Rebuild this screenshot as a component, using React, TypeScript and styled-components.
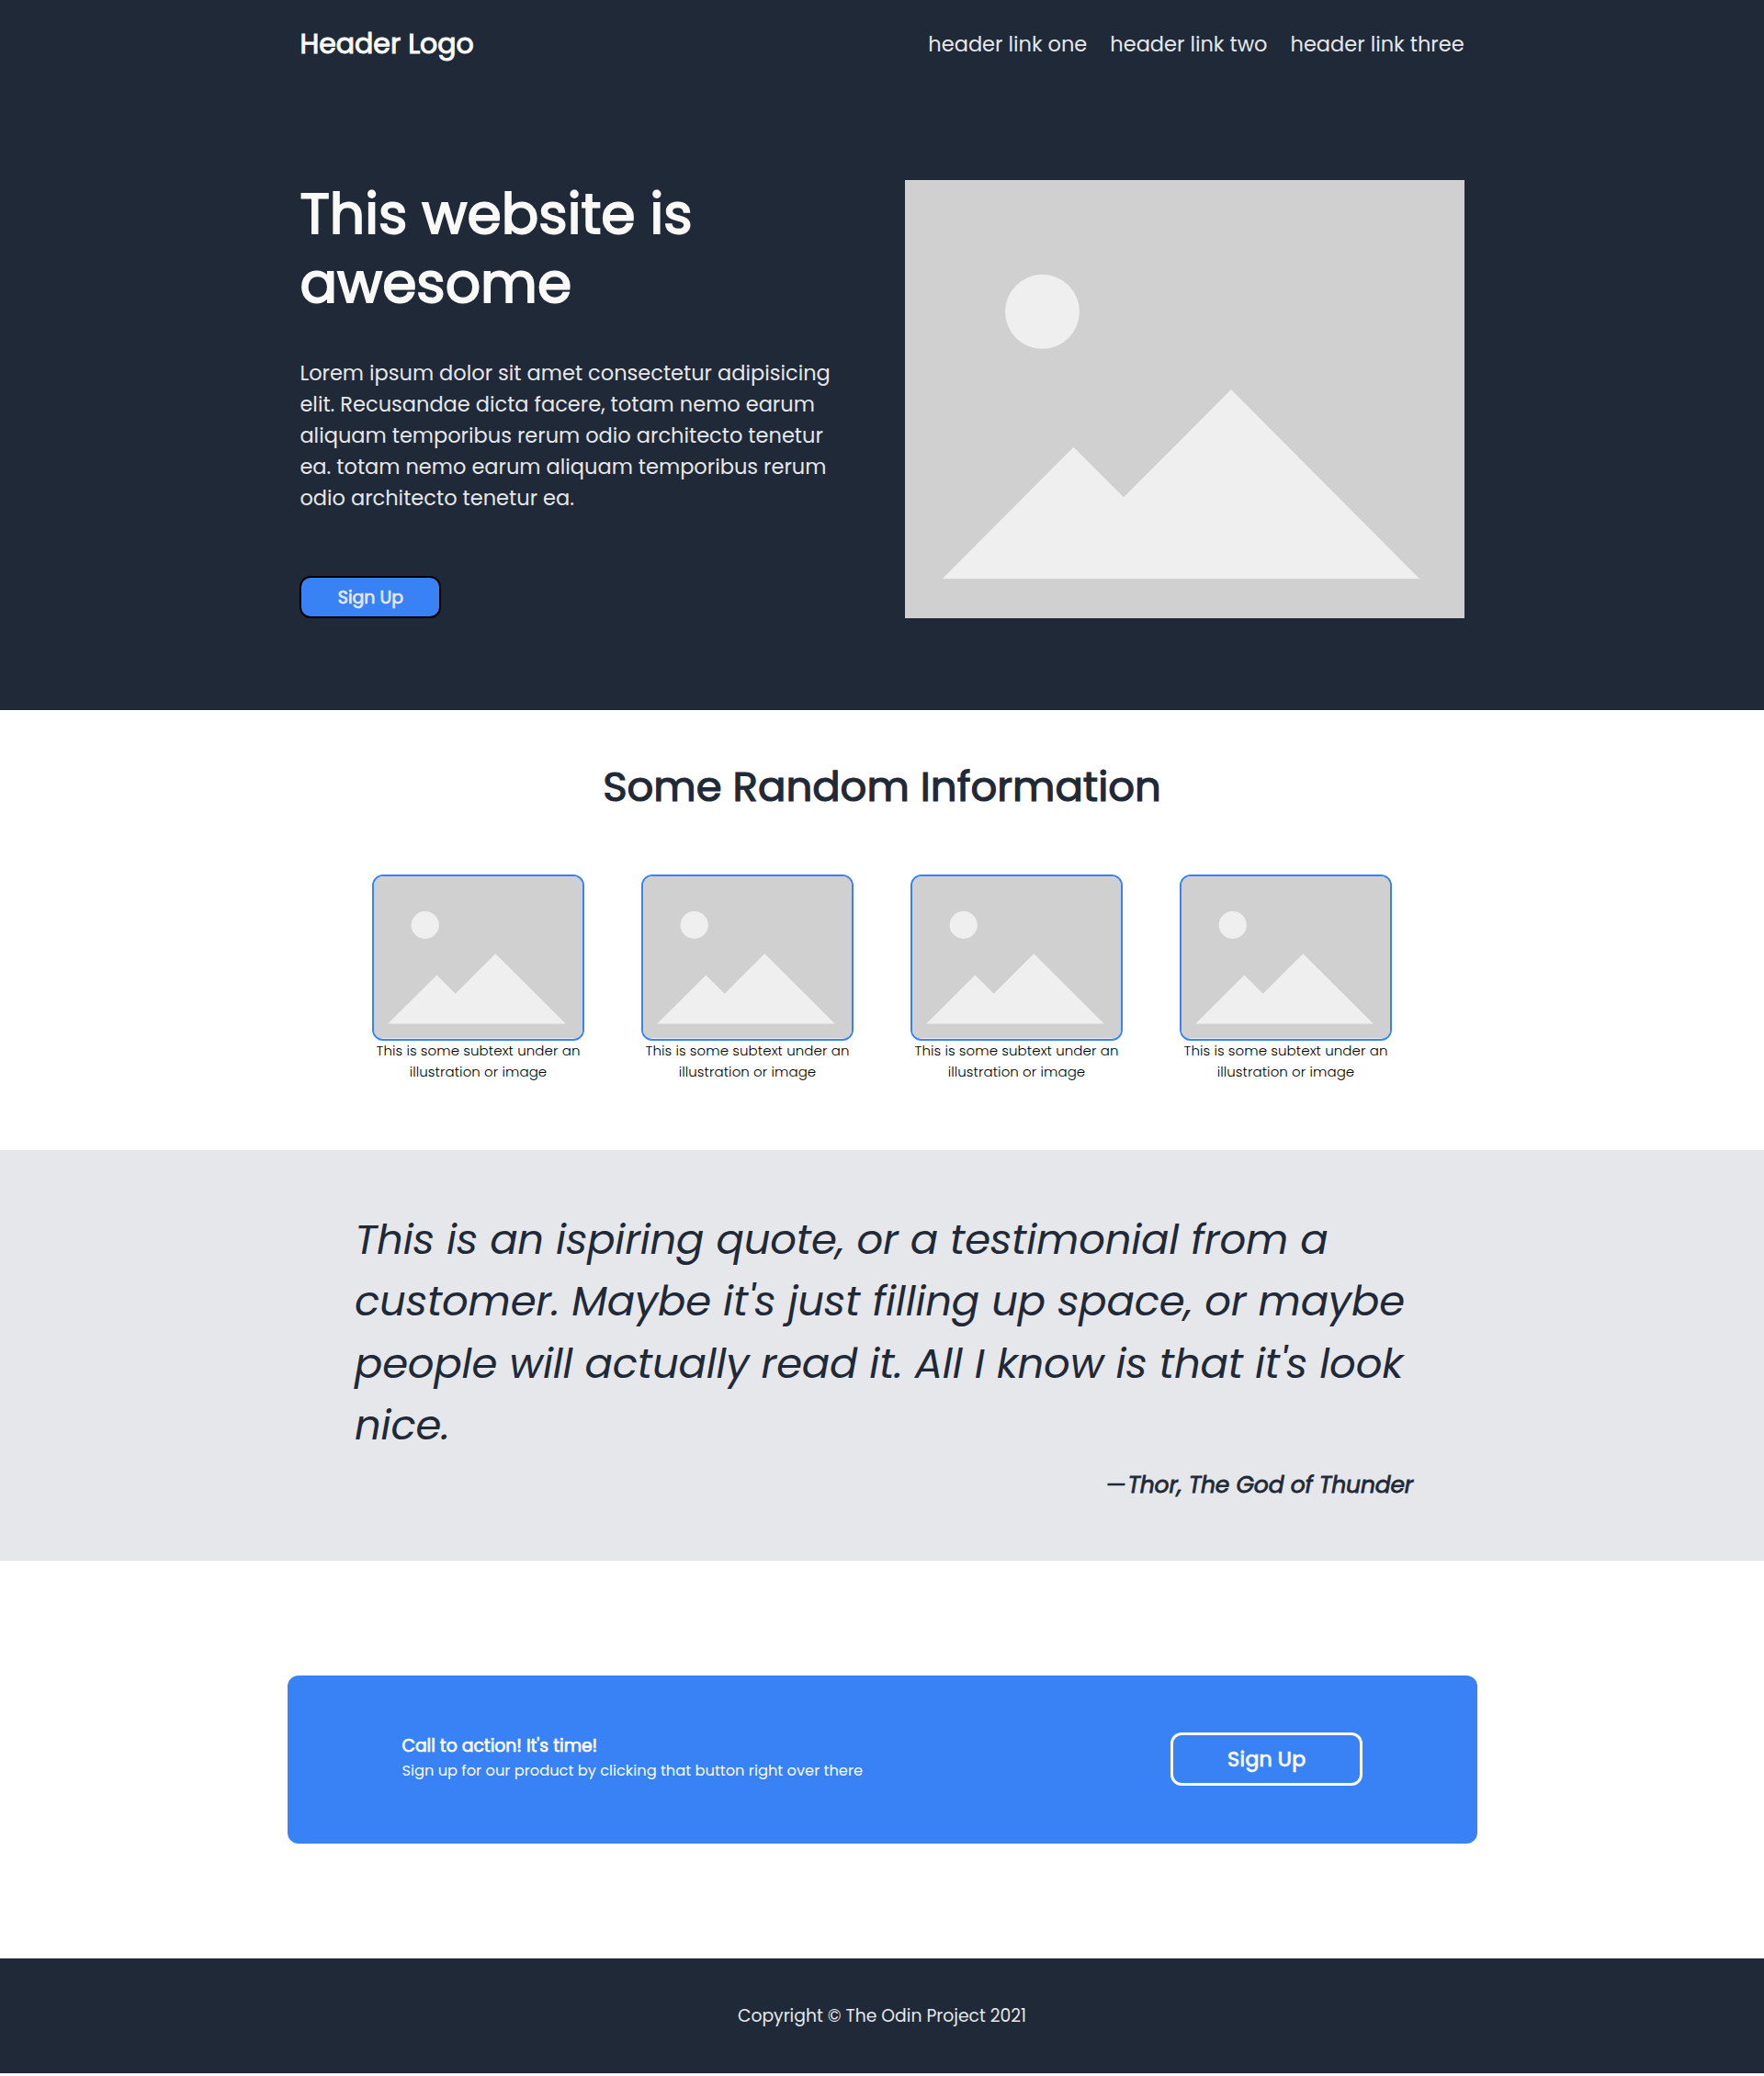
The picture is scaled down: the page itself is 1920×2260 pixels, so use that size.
import React from "react";
import styled, { createGlobalStyle, css } from "styled-components";

const color = {
  dark: "#1f2937",
  light: "#f9faf8",
  soft: "#e5e7eb",
  blue: "#3882f6",
};

const GlobalStyle = createGlobalStyle`
  *, *::before, *::after { box-sizing: border-box; }
  body {
    margin: 0;
    background: #fff;
    color: #000;
    font-family: Poppins, Inter, "Open Sans", sans-serif;
    font-weight: 400;
  }
  h1, h2, h3, p, figure, blockquote, ul { margin: 0; padding: 0; }
`;

/* Bold drawn by thickening the regular outlines, so the widths stay regular. */
const thick = (px: number) => css`
  font-weight: 400;
  -webkit-text-stroke: ${px}px currentColor;
`;

const Top = styled.div`
  background: ${color.dark};
`;

const Header = styled.header`
  display: flex;
  align-items: center;
  justify-content: space-between;
  width: 1267.2px;
  height: 95px;
  margin: 0 auto;
`;

const Logo = styled.div`
  color: ${color.light};
  font-size: 30px;
  line-height: 45px;
  ${thick(1)}
`;

const Nav = styled.ul`
  display: flex;
  gap: 25px;
  list-style: none;
`;

const NavItem = styled.li`
  color: ${color.soft};
  font-size: 22.5px;
  line-height: 34px;
`;

const Hero = styled.section`
  display: flex;
  justify-content: space-between;
  width: 1267.2px;
  margin: 0 auto;
  padding: 101px 0 100px;
`;

const HeroCopy = styled.div`
  display: flex;
  flex-direction: column;
  align-items: flex-start;
  width: 590px;
`;

const HeroTitle = styled.h1`
  width: 480px;
  color: ${color.light};
  font-size: 60px;
  line-height: 75px;
  ${thick(1.9)}
`;

const HeroText = styled.p`
  margin-top: 43px;
  color: ${color.soft};
  font-size: 22.5px;
  line-height: 34px;
`;

const HeroButton = styled.button`
  display: flex;
  align-items: center;
  justify-content: center;
  width: 154px;
  height: 46px;
  margin-top: auto;
  padding: 1px 0 0;
  border: 2px solid #000;
  border-radius: 12px;
  background: ${color.blue};
  color: ${color.soft};
  font-family: inherit;
  font-size: 18.9px;
  ${thick(0.7)}
`;

const HeroPicture = styled.div`
  width: 609px;
  height: 477px;
`;

const Drawing = styled.svg`
  display: block;
  width: 100%;
  height: 100%;
`;

const Info = styled.section`
  height: 479.4px;
  padding-top: 50px;
`;

const InfoTitle = styled.h2`
  color: ${color.dark};
  font-size: 45px;
  line-height: 68px;
  text-align: center;
  ${thick(1.2)}
`;

const Cards = styled.div`
  display: flex;
  justify-content: space-between;
  width: 1110px;
  margin: 61.3px auto 0;
`;

const Card = styled.figure`
  width: 231px;
`;

const CardPicture = styled.div`
  height: 180.4px;
  overflow: hidden;
  border: 2px solid ${color.blue};
  border-radius: 12px;
`;

const Caption = styled.figcaption`
  margin-top: -0.8px;
  font-size: 15px;
  font-weight: 300;
  letter-spacing: 0.08px;
  line-height: 23.2px;
  text-align: center;
`;

const QuoteBand = styled.section`
  height: 446.6px;
  padding-top: 63.5px;
  background: ${color.soft};
`;

const Quote = styled.blockquote`
  width: 1152px;
  margin-left: 386px;
  color: ${color.dark};
  font-size: 45px;
  font-style: italic;
  letter-spacing: -0.24px;
  line-height: 67.5px;
`;

const Author = styled.footer`
  display: flex;
  justify-content: flex-end;
  gap: 2px;
  margin-top: 12.5px;
  font-size: 25px;
  letter-spacing: -0.16px;
  line-height: 37.5px;
`;

const Dash = styled.span`
  ${thick(0.5)}
`;

const AuthorName = styled.span`
  ${thick(0.8)}
`;

const CtaSection = styled.section`
  padding: 125px 0;
`;

const CtaBox = styled.div`
  display: flex;
  align-items: flex-start;
  justify-content: space-between;
  width: 1295px;
  height: 183px;
  margin-left: 313px;
  padding: 62px 125px 0 124.4px;
  border-radius: 12px;
  background: ${color.blue};
  color: ${color.light};
`;

const CtaTitle = styled.h3`
  font-size: 18.8px;
  line-height: 29px;
  ${thick(0.7)}
`;

const CtaText = styled.p`
  margin-top: 0.8px;
  font-size: 16.25px;
  line-height: 24.4px;
`;

const CtaButton = styled.button`
  display: flex;
  align-items: center;
  justify-content: center;
  width: 209px;
  height: 58px;
  padding: 1px 0 0;
  border: 3px solid ${color.light};
  border-radius: 12px;
  background: ${color.blue};
  color: ${color.light};
  font-family: inherit;
  font-size: 22.6px;
  font-weight: 500;
  letter-spacing: -0.15px;
  -webkit-text-stroke: 0.3px currentColor;
`;

const Footer = styled.footer`
  display: flex;
  align-items: center;
  justify-content: center;
  height: 125px;
  background: ${color.dark};
  color: ${color.soft};
  font-size: 18.75px;
`;

const Placeholder = () => (
  <Drawing viewBox="0 0 609 477" preserveAspectRatio="none">
    <rect width="609" height="477" fill="#d0d0d0" />
    <circle cx="149.5" cy="143.3" r="40.5" fill="#efefef" />
    <path d="M40.7 434 183.5 290.7 238 345.3 355 228 560 434Z" fill="#efefef" />
  </Drawing>
);

const links = ["header link one", "header link two", "header link three"];
const captions = Array.from({ length: 4 }, () => "This is some subtext under an illustration or image");

export default function App() {
  return (
    <>
      <GlobalStyle />
      <Top>
        <Header>
          <Logo>Header Logo</Logo>
          <Nav>
            {links.map((label) => (
              <NavItem key={label}>{label}</NavItem>
            ))}
          </Nav>
        </Header>
        <Hero>
          <HeroCopy>
            <HeroTitle>This website is awesome</HeroTitle>
            <HeroText>
              Lorem ipsum dolor sit amet consectetur adipisicing elit. Recusandae dicta facere, totam
              nemo earum aliquam temporibus rerum odio architecto tenetur ea. totam nemo earum
              aliquam temporibus rerum odio architecto tenetur ea.
            </HeroText>
            <HeroButton>Sign Up</HeroButton>
          </HeroCopy>
          <HeroPicture>
            <Placeholder />
          </HeroPicture>
        </Hero>
      </Top>

      <Info>
        <InfoTitle>Some Random Information</InfoTitle>
        <Cards>
          {captions.map((text, i) => (
            <Card key={i}>
              <CardPicture>
                <Placeholder />
              </CardPicture>
              <Caption>{text}</Caption>
            </Card>
          ))}
        </Cards>
      </Info>

      <QuoteBand>
        <Quote>
          This is an ispiring quote, or a testimonial from a customer. Maybe it's just filling up
          space, or maybe people will actually read it. All I know is that it's look nice.
          <Author>
            <Dash>—</Dash>
            <AuthorName>Thor, The God of Thunder</AuthorName>
          </Author>
        </Quote>
      </QuoteBand>

      <CtaSection>
        <CtaBox>
          <div>
            <CtaTitle>Call to action! It's time!</CtaTitle>
            <CtaText>Sign up for our product by clicking that button right over there</CtaText>
          </div>
          <CtaButton>Sign Up</CtaButton>
        </CtaBox>
      </CtaSection>

      <Footer>Copyright © The Odin Project 2021</Footer>
    </>
  );
}
